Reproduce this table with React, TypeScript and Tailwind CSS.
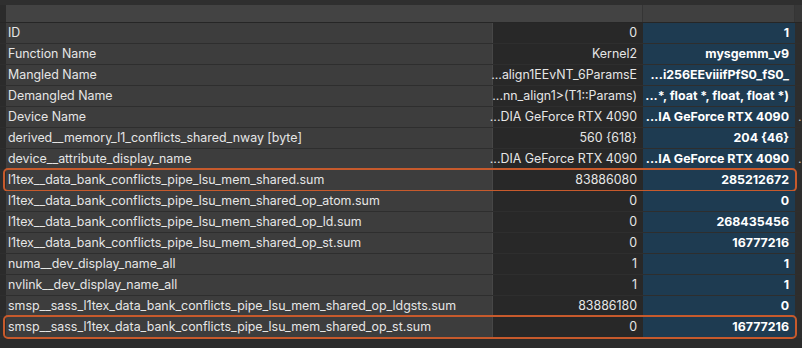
import React from 'react';

interface MetricRow {
  name: string;
  base: string;
  cur: string;
  more?: boolean;
  marked?: boolean;
}

const rows: MetricRow[] = [
  { name: 'ID', base: '0', cur: '1' },
  { name: 'Function Name', base: 'Kernel2', cur: 'mysgemm_v9' },
  { name: 'Mangled Name', base: '...align1EEvNT_6ParamsE', cur: '...i256EEviiifPfS0_fS0_' },
  { name: 'Demangled Name', base: '...nn_align1>(T1::Params)', cur: '...*, float *, float, float *)' },
  { name: 'Device Name', base: '...DIA GeForce RTX 4090', cur: '...IA GeForce RTX 4090', more: true },
  { name: 'derived__memory_l1_conflicts_shared_nway [byte]', base: '560 {618}', cur: '204 {46}' },
  { name: 'device__attribute_display_name', base: '...DIA GeForce RTX 4090', cur: '...IA GeForce RTX 4090', more: true },
  { name: 'l1tex__data_bank_conflicts_pipe_lsu_mem_shared.sum', base: '83886080', cur: '285212672', marked: true },
  { name: 'l1tex__data_bank_conflicts_pipe_lsu_mem_shared_op_atom.sum', base: '0', cur: '0' },
  { name: 'l1tex__data_bank_conflicts_pipe_lsu_mem_shared_op_ld.sum', base: '0', cur: '268435456' },
  { name: 'l1tex__data_bank_conflicts_pipe_lsu_mem_shared_op_st.sum', base: '0', cur: '16777216' },
  { name: 'numa__dev_display_name_all', base: '1', cur: '1' },
  { name: 'nvlink__dev_display_name_all', base: '1', cur: '1' },
  { name: 'smsp__sass_l1tex_data_bank_conflicts_pipe_lsu_mem_shared_op_ldgsts.sum', base: '83886180', cur: '0' },
  { name: 'smsp__sass_l1tex_data_bank_conflicts_pipe_lsu_mem_shared_op_st.sum', base: '0', cur: '16777216', marked: true },
];

export default function App() {
  return (
    <div
      className="w-[802px] h-[348px] overflow-hidden bg-[#2b2b2b] text-[12.4px] text-[#e6e6e6] leading-none"
      style={{ fontFamily: 'Inter, "Liberation Sans", sans-serif' }}
    >
      <div className="h-[5px] bg-[#2f2f2f]" />
      {/* header */}
      <div className="grid grid-cols-[6px_486px_151px_152px_7px] h-[18px] border-b border-[#262626]">
        <div className="bg-[#2b2b2b]" />
        <div className="bg-[#434343]" />
        <div className="bg-[#434343] border-r border-[#353535]" />
        <div className="bg-[#404040] border-r border-[#353535]" />
        <div className="bg-[#383838]" />
      </div>
      {rows.map((r) => (
        <div key={r.name} className="relative grid grid-cols-[6px_486px_151px_152px_7px] h-[21px] border-b border-[#2e2e2e]">
          <div className="bg-[#2b2b2b]" />
          <div className="bg-[#3d3d3d] flex items-center pl-[2px] whitespace-nowrap overflow-hidden">{r.name}</div>
          <div className="bg-[#282828] border-l border-[#474747] flex items-center justify-end pr-[6px] whitespace-nowrap">
            {r.base}
          </div>
          <div className="bg-[#1e3b51] flex items-center justify-end pr-[6px] font-bold text-white whitespace-nowrap">
            {r.cur}
          </div>
          <div className="bg-[#2d2d2d] flex items-center pl-[3px] text-[#bbbbbb] overflow-hidden">{r.more ? '.' : ''}</div>
          {r.marked && (
            <div className="absolute left-[3px] right-[5px] top-[-2px] bottom-[-2px] rounded-[5px] border-2 border-[#c75a2c] pointer-events-none" />
          )}
        </div>
      ))}
    </div>
  );
}
